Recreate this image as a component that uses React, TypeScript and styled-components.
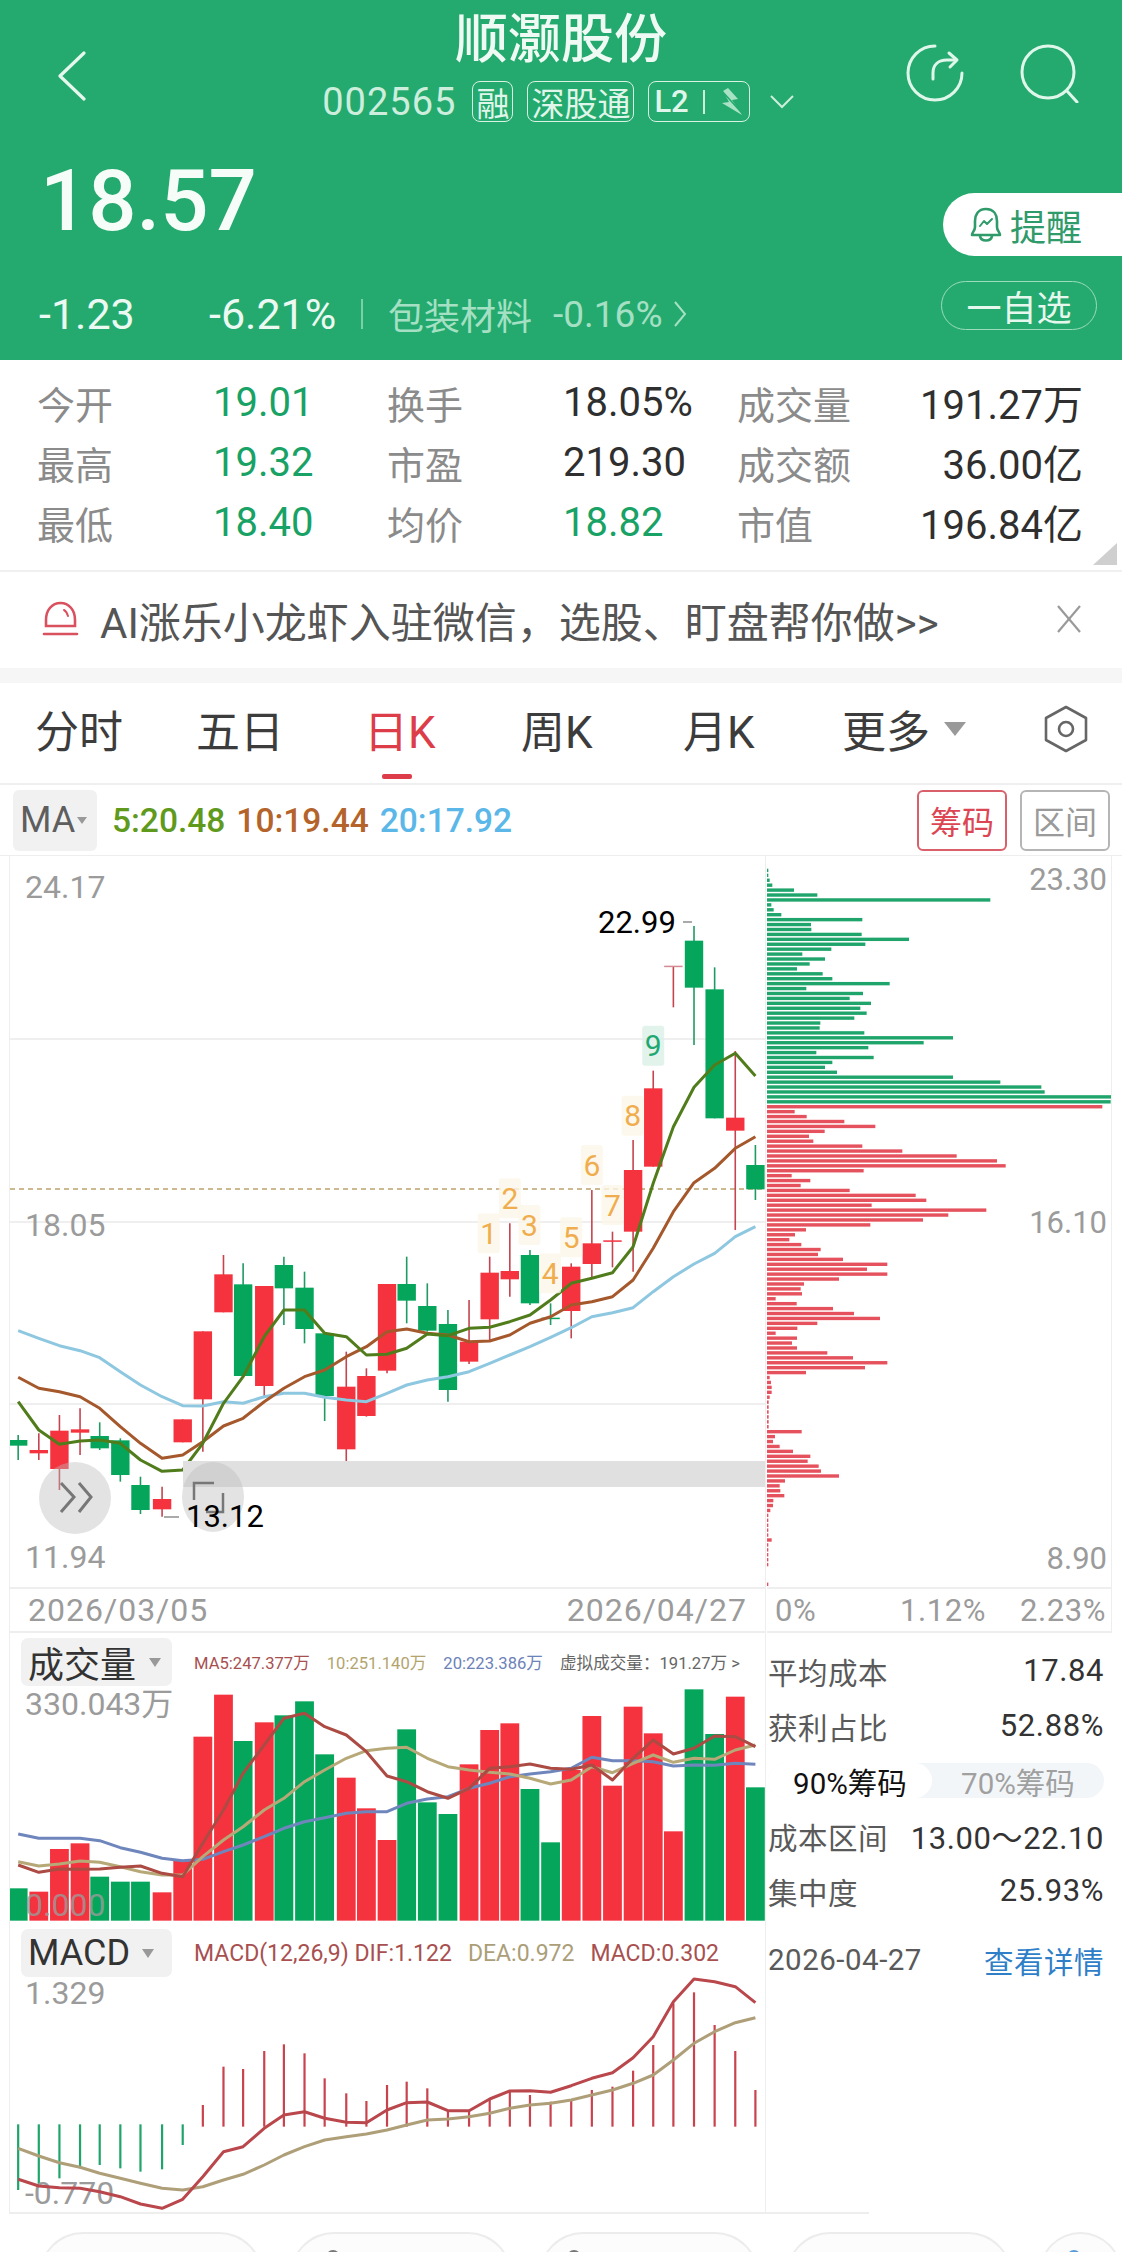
import React from "react";
import styled, { createGlobalStyle } from "styled-components";

const GlobalStyle = createGlobalStyle`
  html, body { margin: 0; padding: 0; background: #fff; }
  * { box-sizing: border-box; }
  body { font-family: Roboto, "Noto Sans CJK SC", sans-serif; }
`;

const FONT = `Roboto, "Noto Sans CJK SC", sans-serif`;
const GREEN = "#05a65c";
const RED = "#f5333f";

/* ---------- chart data, in page coordinates after the helpers below ---------- */
const ZX = [37, 79, 121, 163, 203, 245, 286, 330, 372, 413, 455, 495, 538, 578, 620, 661, 705, 746, 788, 828, 870, 912, 955, 997, 1038, 1079, 1121, 1163, 1205, 1247, 1289, 1330, 1371, 1413, 1455, 1497, 1538];
const cx = (i: number) => ZX[i] / 2.036;
const my = (v: number) => 1260 + v / 3;
const vy = (v: number) => 1630 + v / 3;
const dy = (v: number) => 1920 + v / 3;

type Candle = [string, number, number, number, number];
const CANDLES: Candle[] = [
  ["g", 525, 540, 557, 600], ["r", 520, 570, 580, 600], ["r", 465, 512, 627, 690], ["r", 445, 508, 518, 585],
  ["g", 487, 528, 565, 570], ["g", 535, 541, 645, 665], ["g", 650, 675, 750, 762], ["r", 680, 717, 748, 770],
  ["r", 478, 478, 547, 547], ["r", 214, 214, 418, 575], ["r", -15, 43, 157, 157], ["g", 10, 73, 348, 350],
  ["r", 78, 78, 378, 410], ["g", -10, 15, 85, 195], ["g", 35, 83, 207, 250], ["g", 220, 220, 408, 483],
  ["r", 275, 380, 568, 603], ["r", 325, 348, 468, 470], ["r", 72, 72, 332, 340], ["g", -10, 72, 122, 190],
  ["g", 70, 138, 212, 215], ["g", 150, 192, 390, 425], ["r", 120, 245, 305, 312], ["r", -10, 38, 178, 240],
  ["r", -110, 33, 58, 110], ["g", -30, -15, 130, 135], ["g", 130, 173, 176, 195], ["r", 10, 20, 153, 235],
  ["r", -210, -50, 12, 55], ["r", -85, -59, -56, 22], ["r", -360, -270, -85, 35], ["r", -568, -515, -280, -280],
  ["r", -882, -883, -880, -758], ["g", -1002, -958, -817, -645], ["g", -878, -812, -425, -425], ["r", -627, -427, -388, -90],
  ["g", -345, -285, -212, -180],
];
const MA5 = [425, 510, 553, 543, 540, 550, 600, 634, 630, 550, 430, 350, 230, 150, 150, 220, 230, 285, 283, 265, 222, 227, 205, 202, 185, 165, 120, 70, 55, 38, -40, -230, -400, -518, -585, -620, -552];
const MA10 = [352, 385, 395, 410, 445, 500, 550, 595, 585, 545, 498, 475, 425, 385, 350, 330, 290, 260, 215, 207, 220, 225, 245, 243, 225, 190, 170, 135, 125, 110, 60, -35, -145, -232, -275, -335, -370];
const MA20 = [212, 235, 257, 272, 293, 335, 375, 410, 437, 438, 425, 430, 410, 400, 400, 412, 420, 425, 400, 375, 360, 350, 335, 310, 285, 260, 232, 203, 170, 158, 143, 95, 50, 12, -20, -70, -100];

const VOL: [string, number][] = [
  ["g", 775], ["r", 785], ["r", 657], ["r", 640], ["g", 740], ["g", 755], ["g", 755], ["r", 787], ["r", 690], ["r", 320], ["r", 194], ["g", 333], ["r", 277],
  ["g", 256], ["g", 214], ["g", 373], ["r", 443], ["r", 535], ["r", 630], ["g", 298], ["g", 517], ["g", 552], ["r", 403], ["r", 300], ["r", 280], ["g", 477],
  ["g", 637], ["r", 420], ["r", 258], ["r", 467], ["r", 230], ["r", 310], ["r", 604], ["g", 178], ["g", 312], ["r", 200], ["g", 472],
];
const VMA5 = [705, 727, 717, 718, 717, 712, 708, 730, 740, 640, 540, 430, 345, 265, 250, 290, 315, 365, 438, 455, 485, 505, 475, 415, 410, 402, 415, 418, 405, 450, 385, 330, 372, 355, 318, 320, 350];
const VMA10 = [695, 708, 702, 693, 697, 710, 725, 735, 735, 680, 630, 590, 540, 505, 455, 420, 385, 362, 355, 352, 385, 410, 420, 427, 432, 445, 462, 450, 410, 428, 400, 375, 397, 385, 388, 360, 345];
const VMA20 = [612, 625, 625, 625, 632, 653, 667, 685, 692, 688, 665, 645, 620, 595, 575, 563, 550, 545, 545, 520, 507, 500, 475, 460, 440, 432, 425, 415, 382, 392, 392, 395, 408, 405, 406, 400, 403];

const MACD_TOPS = [810, 795, 775, 745, 735, 745, 755, 748, 675, 555, 440, 447, 393, 373, 400, 475, 520, 543, 495, 485, 505, 575, 573, 535, 510, 525, 545, 540, 510, 500, 452, 375, 250, 217, 315, 393, 510];
const DIF = [778, 798, 803, 805, 815, 830, 852, 865, 838, 770, 695, 680, 625, 585, 575, 595, 607, 608, 570, 548, 546, 572, 572, 537, 513, 512, 517, 497, 475, 458, 413, 350, 245, 177, 185, 200, 248];
const DEA = [685, 708, 728, 742, 760, 775, 790, 805, 810, 800, 780, 763, 735, 705, 680, 660, 650, 642, 630, 615, 600, 597, 590, 580, 565, 555, 550, 540, 525, 510, 490, 465, 420, 370, 335, 308, 293];

const CHIPS = [26, 26, 30, 38, 103, 173, 692, 35, 42, 65, 308, 154, 155, 306, 448, 317, 215, 128, 196, 150, 112, 189, 218, 390, 140, 310, 270, 334, 302, 321, 284, 182, 180, 314, 580, 492, 326, 170, 342, 218, 196, 232, 580, 722, 845, 855, 1055, 1053,
  1028, 105, 141, 254, 347, 195, 148, 161, 308, 428, 591, 712, 738, 312, 96, 152, 123, 270, 468, 500, 336, 680, 566, 490, 332, 139, 106, 89, 125, 183, 175, 250, 383, 322, 383, 238, 133, 123, 127, 48, 111, 220, 283, 361, 173, 113, 48, 112, 97, 112, 203, 280, 383, 316, 139, 30, 34, 36, 36, 30, 27, 27, 27, 27, 27, 27, 126, 46, 40, 60, 100, 152, 144, 177, 184, 238, 76, 60, 62, 74, 41, 40, 32, 26, 26, 26, 26, 26, 36, 26, 26, 26, 26, 26, 0, 0, 0, 26];
const GREEN_CHIPS = 48;

const T9: [string, number, number, boolean][] = [
  ["1", 995, -80, false], ["2", 1038, -185, false], ["3", 1078, -105, false], ["4", 1120, 40, false], ["5", 1163, -68, false],
  ["6", 1205, -285, false], ["7", 1247, -165, false], ["8", 1288, -433, false], ["9", 1330, -643, true],
];

const pts = (vals: number[], f: (v: number) => number) => vals.map((v, i) => `${cx(i).toFixed(1)},${f(v).toFixed(1)}`).join(" ");

/* ---------- layout ---------- */
const Page = styled.div`
  width: 1122px;
  height: 2252px;
  overflow: hidden;
  background: #fff;
  font-family: ${FONT};
`;

const Header = styled.header`
  height: 360px;
  background: #24aa6e;
  color: #f2fbf6;
`;

const Nav = styled.div`
  display: grid;
  grid-template-columns: 1fr auto 1fr;
  padding-top: 13px;
  height: 122px;
`;

const IconBack = styled.svg`
  margin: 38px 0 0 58px;
  width: 28px;
  height: 50px;
`;

const NavCenter = styled.div`
  display: flex;
  flex-direction: column;
  align-items: center;
`;

const Title = styled.h1`
  margin: 0 0 14px;
  height: 54px;
  line-height: 54px;
  font-size: 53px;
  font-weight: 500;
  color: #f0faf5;
  white-space: nowrap;
`;

const SubRow = styled.div`
  display: flex;
  align-items: center;
  gap: 14px;
  margin-left: -6px;
  height: 41px;
`;

const Code = styled.span`
  font-size: 38px;
  letter-spacing: 1px;
  color: #cdeedd;
  margin-right: 2px;
`;

const Tag = styled.span`
  display: inline-flex;
  align-items: center;
  justify-content: center;
  height: 41px;
  padding: 0 3px;
  border: 1.5px solid #d8f2e5;
  border-radius: 8px;
  font-size: 33px;
  color: #e0f6ea;
  white-space: nowrap;
`;

const LevelTag = styled(Tag)`
  gap: 14px;
  padding: 0 6px 0 5px;
  font-size: 31px;
  font-weight: 500;
`;

const Chevron = styled.svg`
  width: 24px;
  height: 14px;
  margin-left: 6px;
`;

const NavIcons = styled.div`
  display: flex;
  justify-content: flex-end;
  gap: 55px;
  margin: 30px 42px 0 0;
`;

const QuoteRow = styled.div`
  display: flex;
  justify-content: space-between;
`;

const QuoteLeft = styled.div`
  padding: 37px 0 0 39px;
`;

const Price = styled.div`
  height: 84px;
  line-height: 84px;
  font-size: 85px;
  font-weight: 500;
  margin-left: 1px;
  color: #f6fdf9;
`;

const ChangeRow = styled.div`
  display: flex;
  align-items: center;
  height: 40px;
  margin-top: 51px;
  white-space: nowrap;
`;

const Change = styled.span<{ $w: number }>`
  width: ${(p) => p.$w}px;
  font-size: 43px;
  color: #ecf9f2;
`;

const VBar = styled.i`
  display: block;
  width: 2px;
  height: 30px;
  margin: 0 25px 0 25px;
  background: #7cd0a8;
`;

const Sector = styled.span`
  font-size: 36px;
  color: #a5e0c4;
`;

const SectorPct = styled.span`
  font-size: 37px;
  color: #a5e0c4;
  margin-left: 21px;
`;

const Gt = styled.svg`
  width: 14px;
  height: 30px;
  margin-left: 11px;
`;

const QuoteRight = styled.div`
  display: flex;
  flex-direction: column;
  align-items: flex-end;
  padding-top: 71px;
`;

const RemindBtn = styled.div`
  display: flex;
  align-items: center;
  gap: 8px;
  width: 179px;
  height: 63px;
  padding-left: 27px;
  background: #fff;
  border-radius: 32px 0 0 32px;
  font-size: 36px;
  color: #2f9a6a;
`;

const WatchBtn = styled.div`
  display: flex;
  align-items: center;
  justify-content: center;
  width: 156px;
  height: 49px;
  margin: 25px 25px 0 0;
  border: 1.5px solid #9adcbd;
  border-radius: 25px;
  font-size: 35px;
  color: #e6f8ee;
`;

const Stats = styled.section`
  position: relative;
  display: grid;
  grid-template-columns: 176px 174px 176px 174px 100px 1fr;
  grid-auto-rows: 60px;
  height: 212px;
  padding: 12px 39px 0 37px;
  align-items: center;
  border-bottom: 2px solid #f0f0f0;
  font-size: 38px;
  white-space: nowrap;
`;

const StatLabel = styled.span`
  color: #8b8b8b;
`;

const StatValue = styled.span<{ $green?: boolean; $end?: boolean }>`
  font-size: 40px;
  color: ${(p) => (p.$green ? "#18a265" : "#2f2f2f")};
  text-align: ${(p) => (p.$end ? "right" : "left")};
`;

const Corner = styled.i`
  position: absolute;
  right: 5px;
  bottom: 5px;
  width: 24px;
  height: 22px;
  background: #cfcfcf;
  clip-path: polygon(100% 0, 100% 100%, 0 100%);
`;

const Banner = styled.section`
  display: flex;
  align-items: center;
  height: 96px;
  padding: 0 40px 2px 42px;
  font-size: 42px;
  color: #555;
`;

const BannerText = styled.span`
  flex: 1;
  margin-left: 21px;
  white-space: nowrap;
`;

const Gap = styled.div`
  height: 15px;
  background: #f6f6f6;
`;

const Tabs = styled.nav`
  display: grid;
  grid-template-columns: 161px 168px 157px 162px 159px 202px auto;
  align-items: center;
  height: 102px;
  padding: 0 0 8px 35px;
  border-bottom: 2px solid #efefef;
`;

const Tab = styled.span<{ $active?: boolean }>`
  position: relative;
  display: flex;
  align-items: center;
  font-size: 44px;
  color: ${(p) => (p.$active ? "#dd3d49" : "#3c3c3c")};
  white-space: nowrap;
  &::after {
    content: "";
    display: ${(p) => (p.$active ? "block" : "none")};
    position: absolute;
    left: 18px;
    top: 77px;
    width: 30px;
    height: 5px;
    border-radius: 2px;
    background: #dd3d49;
  }
`;

const Caret = styled.i<{ $w: number; $h: number; $c?: string; $ml?: number }>`
  display: inline-block;
  width: 0;
  height: 0;
  margin-left: ${(p) => p.$ml ?? 6}px;
  border-left: ${(p) => p.$w / 2}px solid transparent;
  border-right: ${(p) => p.$w / 2}px solid transparent;
  border-top: ${(p) => p.$h}px solid ${(p) => p.$c ?? "#9a9a9a"};
`;

const MaRow = styled.div`
  display: flex;
  align-items: center;
  height: 70px;
  padding: 4px 12px 4px 13px;
`;

const MaBtn = styled.div`
  display: flex;
  align-items: center;
  width: 84px;
  height: 61px;
  padding-left: 7px;
  background: #f1f1f1;
  border-radius: 6px;
  font-size: 36px;
  color: #5e5e5e;
`;

const MaValues = styled.div`
  display: flex;
  flex: 1;
  gap: 11px;
  margin-left: 15px;
`;

const MaValue = styled.span<{ $c: string }>`
  font-size: 33.5px;
  font-weight: 500;
  color: ${(p) => p.$c};
`;

const RangeBtn = styled.div<{ $c: string; $text: string }>`
  display: flex;
  align-items: center;
  justify-content: center;
  width: 90px;
  height: 61px;
  margin-right: 13px;
  border: 2px solid ${(p) => p.$c};
  border-radius: 6px;
  font-size: 32px;
  color: ${(p) => p.$text};
  &:last-child {
    margin-right: 0;
  }
`;

const Board = styled.div`
  display: grid;
  grid-template-columns: 757px 1fr;
  padding-left: 9px;
  border-top: 1px solid #eee;
`;

const LeftCol = styled.div`
  border-left: 1px solid #eee;
  border-right: 1px solid #eee;
`;

const RightCol = styled.div`
  padding-left: 1px;
`;

const Canvas = styled.svg`
  display: block;
`;

const DateRow = styled.div`
  display: flex;
  justify-content: space-between;
  align-items: center;
  height: 46px;
  padding: 0 18px;
  border-top: 2px solid #eee;
  border-bottom: 2px solid #eee;
  font-size: 32px;
  letter-spacing: 1px;
  color: #9b9b9b;
`;

const Panel = styled.div<{ $h: number }>`
  position: relative;
  height: ${(p) => p.$h}px;
`;

const PanelHead = styled.div`
  position: absolute;
  top: 5px;
  left: 11px;
  display: flex;
  align-items: center;
`;

const PanelBtn = styled.div`
  display: flex;
  align-items: center;
  width: 151px;
  height: 48px;
  padding-left: 7px;
  background: #f1f1f1;
  border-radius: 7px;
  font-size: 36px;
  color: #333;
`;

const Legend = styled.div<{ $size: number; $gap: number }>`
  display: flex;
  gap: ${(p) => p.$gap}px;
  margin: 0 0 0 22px;
  font-size: ${(p) => p.$size}px;
  white-space: nowrap;
`;

const LegendItem = styled.span<{ $c: string }>`
  color: ${(p) => p.$c};
`;

const ChipBox = styled.div`
  width: 345px;
  border-right: 1px solid #eee;
`;

const PctRow = styled.div`
  display: grid;
  grid-template-columns: 125px 120px 1fr;
  align-items: center;
  height: 46px;
  padding-left: 8px;
  border-top: 2px solid #eee;
  border-bottom: 2px solid #eee;
  font-size: 31px;
  letter-spacing: 0.6px;
  color: #9b9b9b;
`;

const Info = styled.div`
  display: flex;
  flex-direction: column;
  padding: 10px 18px 0 1px;
`;

const InfoRow = styled.div<{ $mt?: number }>`
  display: flex;
  justify-content: space-between;
  align-items: center;
  height: 55px;
  margin-top: ${(p) => p.$mt ?? 0}px;
  font-size: 29.5px;
  white-space: nowrap;
`;

const InfoLabel = styled.span`
  color: #5a5a5a;
  letter-spacing: 0.5px;
`;

const InfoValue = styled.span`
  color: #333;
  font-size: 31px;
  letter-spacing: 0.6px;
`;

const InfoLink = styled.span`
  color: #2f7ec8;
  letter-spacing: 0.5px;
`;

const ChipTabs = styled.div`
  display: flex;
  align-self: center;
  width: 100%;
  height: 35px;
  border-radius: 18px;
  background: #f3f6f9;
`;

const ChipTab = styled.div<{ $active?: boolean; $w: number }>`
  display: flex;
  align-items: center;
  justify-content: center;
  width: ${(p) => p.$w}px;
  border-radius: 18px;
  font-size: 29.5px;
  background: ${(p) => (p.$active ? "#fff" : "transparent")};
  color: ${(p) => (p.$active ? "#111" : "#a0a0a0")};
`;

const Rule = styled.div`
  margin-left: 9px;
  width: 860px;
  height: 2px;
  background: #eee;
`;

const Dock = styled.div`
  display: grid;
  grid-template-columns: 224px 222px 220px 226px 1fr;
  column-gap: 27px;
  margin-top: 18px;
  padding-left: 39px;
`;

const DockPill = styled.div`
  height: 60px;
  padding-top: 16px;
  border: 2px solid #ececec;
  border-bottom: 0;
  border-radius: 44px 44px 0 0;
  background: #fcfcfc;
`;

const DockDot = styled.i<{ $c: string; $ml: number }>`
  display: block;
  width: 14px;
  height: 14px;
  margin-left: ${(p) => p.$ml}px;
  border-radius: 50%;
  background: ${(p) => p.$c};
`;

/* ---------- svg text ---------- */
const AxisText = styled.text<{ $size?: number }>`
  font-family: ${FONT};
  font-size: ${(p) => p.$size ?? 32}px;
  fill: #9b9b9b;
  dominant-baseline: central;
`;

const PriceMark = styled.text`
  font-family: ${FONT};
  font-size: 31px;
  fill: #000;
  dominant-baseline: central;
`;

const T9Text = styled.text<{ $hit: boolean }>`
  font-family: ${FONT};
  font-size: 30px;
  fill: ${(p) => (p.$hit ? "#1fa772" : "#f0ad4e")};
  dominant-baseline: central;
  text-anchor: middle;
`;

const Line = ({ points, color, width = 3 }: { points: string; color: string; width?: number }) => (
  <polyline points={points} fill="none" stroke={color} strokeWidth={width} strokeLinejoin="round" />
);

/* ---------- charts ---------- */
const MainChart = () => (
  <Canvas width={755} height={731} viewBox="10 856 755 731">
    {[1038, 1221, 1403].map((y) => (
      <rect key={y} x={10} y={y} width={755} height={2} fill="#efefef" />
    ))}
    <line x1={10} x2={765} y1={1189} y2={1189} stroke="#cdb98f" strokeWidth={2} strokeDasharray="5 4" />
    <AxisText x={25} y={887}>24.17</AxisText>
    <AxisText x={25} y={1225}>18.05</AxisText>
    <AxisText x={25} y={1557}>11.94</AxisText>
    {CANDLES.map(([c, wt, bt, bb, wb], i) => {
      const fill = c === "g" ? GREEN : RED;
      const wick = c === "g" ? "#1f9a62" : "#c4444f";
      return (
        <g key={i}>
          <line x1={cx(i)} x2={cx(i)} y1={my(wt)} y2={my(wb)} stroke={wick} strokeWidth={1.6} />
          <rect x={cx(i) - 9.2} y={my(bt)} width={18.4} height={Math.max(my(bb) - my(bt), 1.5)} fill={i === 32 ? "#d58a92" : fill} />
        </g>
      );
    })}
    <Line points={pts(MA20, my)} color="#8ec7e0" />
    <Line points={pts(MA10, my)} color="#a5582b" />
    <Line points={pts(MA5, my)} color="#517c1c" />
    {T9.map(([n, zx, zy, hit]) => {
      const x = zx / 2.036;
      const y = my(zy);
      return (
        <g key={n}>
          <rect x={x - 11} y={y - 20} width={22} height={40} rx={3} fill={hit ? "#d9f0e6" : "#fdf6e9"} fillOpacity={0.8} />
          <T9Text x={x} y={y} $hit={hit}>{n}</T9Text>
        </g>
      );
    })}
    <PriceMark x={598} y={922}>22.99</PriceMark>
    <rect x={683} y={921} width={9} height={2} fill="#aaa" />
    <rect x={183} y={1461} width={582} height={26} fill="#e0e0e0" />
    <ellipse cx={75} cy={1498} rx={36} ry={36} fill="#bdbdbd" fillOpacity={0.42} />
    <ellipse cx={213} cy={1497} rx={31} ry={35} fill="#bdbdbd" fillOpacity={0.42} />
    <polyline points="61,1483 74,1497 61,1512" fill="none" stroke="#777" strokeWidth={3} />
    <polyline points="79,1483 91,1497 79,1512" fill="none" stroke="#777" strokeWidth={3} />
    <polyline points="194,1500 194,1483 214,1483" fill="none" stroke="#777" strokeWidth={2.5} />
    <polyline points="223,1493 223,1512 206,1512" fill="none" stroke="#777" strokeWidth={2.5} />
    <rect x={164} y={1516} width={15} height={2} fill="#aaa" />
    <PriceMark x={186} y={1516}>13.12</PriceMark>
  </Canvas>
);

const ChipChart = () => (
  <Canvas width={344} height={731} viewBox="767 856 344 731">
    {CHIPS.map((v, i) =>
      v === 0 ? null : (
        <rect
          key={i}
          x={767}
          y={850 + (40 + 9.65 * i) / 1.96 - 1.7}
          width={(v - 22) / 3}
          height={3.4}
          fill={i < GREEN_CHIPS ? "#1fa56b" : "#e5525d"}
        />
      )
    )}
    <AxisText x={1107} y={879} textAnchor="end" $size={31}>23.30</AxisText>
    <AxisText x={1107} y={1222} textAnchor="end" $size={31}>16.10</AxisText>
    <AxisText x={1107} y={1558} textAnchor="end" $size={31}>8.90</AxisText>
  </Canvas>
);

const VolumeChart = () => (
  <Canvas width={755} height={291} viewBox="10 1633 755 291">
    {VOL.map(([c, top], i) => (
      <rect key={i} x={cx(i) - 9.4} y={vy(top)} width={18.8} height={vy(872) - vy(top)} fill={c === "g" ? GREEN : RED} />
    ))}
    <Line points={pts(VMA20, vy)} color="#6f86bd" />
    <Line points={pts(VMA10, vy)} color="#b7a878" />
    <Line points={pts(VMA5, vy)} color="#ab4b43" />
    <AxisText x={25} y={1704}>330.043万</AxisText>
    <AxisText x={25} y={1905} fillOpacity={0.8}>0.000</AxisText>
  </Canvas>
);

const MacdChart = () => (
  <Canvas width={755} height={288} viewBox="10 1924 755 288">
    {MACD_TOPS.map((v, i) =>
      i < 9 ? (
        <rect key={i} x={cx(i) - 1.1} y={dy(613)} width={2.2} height={dy(v) - dy(613)} fill="#1fa56b" />
      ) : (
        <rect key={i} x={cx(i) - 1.1} y={dy(v)} width={2.2} height={dy(620) - dy(v)} fill="#c9434e" />
      )
    )}
    <AxisText x={25} y={1993}>1.329</AxisText>
    <AxisText x={25} y={2193}>-0.770</AxisText>
    <Line points={pts(DEA, dy)} color="#ae9f78" />
    <Line points={pts(DIF, dy)} color="#b9474c" />
  </Canvas>
);

const rows: [string, string, boolean, string, string, boolean, string, string][] = [
  ["今开", "19.01", true, "换手", "18.05%", false, "成交量", "191.27万"],
  ["最高", "19.32", true, "市盈", "219.30", false, "成交额", "36.00亿"],
  ["最低", "18.40", true, "均价", "18.82", true, "市值", "196.84亿"],
];

export default function App() {
  return (
    <Page>
      <GlobalStyle />
      <Header>
        <Nav>
          <IconBack viewBox="0 0 28 50">
            <polyline points="26,2 2,25 26,48" fill="none" stroke="#e6f7ee" strokeWidth={3.2} strokeLinecap="round" strokeLinejoin="round" />
          </IconBack>
          <NavCenter>
            <Title>顺灏股份</Title>
            <SubRow>
              <Code>002565</Code>
              <Tag>融</Tag>
              <Tag>深股通</Tag>
              <LevelTag>
                L2
                <svg width="2" height="24" viewBox="0 0 2 24">
                  <rect width="2" height="24" fill="#cdeedd" />
                </svg>
                <svg width="24" height="30" viewBox="0 0 24 30">
                  <path d="M9 1 L19 12 L13 13 L23 28 L3 16 L10 15 L4 4 Z" fill="#a9e3c6" />
                  <line x1="2" y1="3" x2="22" y2="25" stroke="#24aa6e" strokeWidth={1.6} />
                </svg>
              </LevelTag>
              <Chevron viewBox="0 0 24 14">
                <polyline points="1,1 12,12 23,1" fill="none" stroke="#cdeedd" strokeWidth={2} />
              </Chevron>
            </SubRow>
          </NavCenter>
          <NavIcons>
            <svg width="60" height="60" viewBox="0 0 60 60" fill="none" stroke="#dff6ea" strokeWidth={3} strokeLinecap="round" strokeLinejoin="round">
              <path d="M30 3 A27 27 0 1 0 57 30" />
              <path d="M28 36 V30 C28 22 33 17 42 17 H51" />
              <path d="M44 10 L52 17 L45 24" />
            </svg>
            <svg width="60" height="60" viewBox="0 0 60 60" fill="none" stroke="#dff6ea" strokeWidth={3} strokeLinecap="round">
              <circle cx="28" cy="29" r="26" />
              <line x1="47" y1="48" x2="57" y2="59" />
            </svg>
          </NavIcons>
        </Nav>
        <QuoteRow>
          <QuoteLeft>
            <Price>18.57</Price>
            <ChangeRow>
              <Change $w={170}>-1.23</Change>
              <Change $w={127}>-6.21%</Change>
              <VBar />
              <Sector>包装材料</Sector>
              <SectorPct>-0.16%</SectorPct>
              <Gt viewBox="0 0 14 30">
                <polyline points="2,3 12,15 2,27" fill="none" stroke="#a5e0c4" strokeWidth={2} />
              </Gt>
            </ChangeRow>
          </QuoteLeft>
          <QuoteRight>
            <RemindBtn>
              <svg width="32" height="36" viewBox="0 0 32 36" fill="none" stroke="#2f9a6a" strokeWidth={2.6} strokeLinejoin="round" strokeLinecap="round">
                <path d="M16 2 C8 2 5 8 5 14 V20 C5 24 2 25 2 28 H30 C30 25 27 24 27 20 V14 C27 8 24 2 16 2 Z" />
                <path d="M10 29 C11 35 21 35 22 29" />
                <path d="M10 19 L14 14 L17 17 L22 12" strokeWidth={2} />
              </svg>
              提醒
            </RemindBtn>
            <WatchBtn>一自选</WatchBtn>
          </QuoteRight>
        </QuoteRow>
      </Header>

      <Stats>
        {rows.map((r) => (
          <React.Fragment key={r[0]}>
            <StatLabel>{r[0]}</StatLabel>
            <StatValue $green={r[2]}>{r[1]}</StatValue>
            <StatLabel>{r[3]}</StatLabel>
            <StatValue $green={r[5]}>{r[4]}</StatValue>
            <StatLabel>{r[6]}</StatLabel>
            <StatValue $end>{r[7]}</StatValue>
          </React.Fragment>
        ))}
        <Corner />
      </Stats>

      <Banner>
        <svg width="37" height="36" viewBox="0 0 37 36" fill="none" stroke="#d9505f" strokeWidth={2.6} strokeLinecap="round">
          <path d="M4 25 V19 C4 9 10 2 18.5 2 C27 2 33 9 33 19 V25 Z" />
          <path d="M22 9 C24 10 25 12 26 15" strokeWidth={2} />
          <line x1="2" y1="33" x2="35" y2="33" />
        </svg>
        <BannerText>AI涨乐小龙虾入驻微信，选股、盯盘帮你做&gt;&gt;</BannerText>
        <svg width="26" height="28" viewBox="0 0 26 28" fill="none" stroke="#9a9a9a" strokeWidth={2.2}>
          <line x1="2" y1="1" x2="24" y2="27" />
          <line x1="24" y1="1" x2="2" y2="27" />
        </svg>
      </Banner>
      <Gap />

      <Tabs>
        <Tab>分时</Tab>
        <Tab>五日</Tab>
        <Tab $active>日K</Tab>
        <Tab>周K</Tab>
        <Tab>月K</Tab>
        <Tab>
          更多
          <Caret $w={22} $h={14} $c="#999" $ml={14} />
        </Tab>
        <svg width="44" height="48" viewBox="0 0 44 48" fill="none" stroke="#666" strokeWidth={2.6}>
          <path d="M22 2 L42 13 V35 L22 46 L2 35 V13 Z" strokeLinejoin="round" />
          <circle cx="22" cy="24" r="7" />
        </svg>
      </Tabs>

      <MaRow>
        <MaBtn>
          MA
          <Caret $w={10} $h={7} $c="#999" $ml={2} />
        </MaBtn>
        <MaValues>
          <MaValue $c="#5f9a1d">5:20.48</MaValue>
          <MaValue $c="#b4632a">10:19.44</MaValue>
          <MaValue $c="#5bb7e8">20:17.92</MaValue>
        </MaValues>
        <RangeBtn $c="#d9606b" $text="#dc4653">筹码</RangeBtn>
        <RangeBtn $c="#b5b5b5" $text="#9a9a9a">区间</RangeBtn>
      </MaRow>

      <Board>
        <LeftCol>
          <MainChart />
          <DateRow>
            <span>2026/03/05</span>
            <span>2026/04/27</span>
          </DateRow>
          <Panel $h={291}>
            <VolumeChart />
            <PanelHead>
              <PanelBtn>
                成交量
                <Caret $w={13} $h={9} $c="#999" $ml={13} />
              </PanelBtn>
              <Legend $size={16.6} $gap={17}>
                <LegendItem $c="#a85050">MA5:247.377万</LegendItem>
                <LegendItem $c="#b3a46e">10:251.140万</LegendItem>
                <LegendItem $c="#6d82b8">20:223.386万</LegendItem>
                <LegendItem $c="#666">虚拟成交量：191.27万 &gt;</LegendItem>
              </Legend>
            </PanelHead>
          </Panel>
          <Panel $h={288}>
            <MacdChart />
            <PanelHead>
              <PanelBtn>
                MACD
                <Caret $w={13} $h={9} $c="#999" $ml={12} />
              </PanelBtn>
              <Legend $size={23} $gap={16}>
                <LegendItem $c="#a85050">MACD(12,26,9) DIF:1.122</LegendItem>
                <LegendItem $c="#ab9e78">DEA:0.972</LegendItem>
                <LegendItem $c="#a85050">MACD:0.302</LegendItem>
              </Legend>
            </PanelHead>
          </Panel>
        </LeftCol>
        <RightCol>
          <ChipBox>
            <ChipChart />
            <PctRow>
              <span>0%</span>
              <span>1.12%</span>
              <span>2.23%</span>
            </PctRow>
          </ChipBox>
          <Info>
            <InfoRow>
              <InfoLabel>平均成本</InfoLabel>
              <InfoValue>17.84</InfoValue>
            </InfoRow>
            <InfoRow>
              <InfoLabel>获利占比</InfoLabel>
              <InfoValue>52.88%</InfoValue>
            </InfoRow>
            <InfoRow>
              <ChipTabs>
                <ChipTab $active $w={164}>90%筹码</ChipTab>
                <ChipTab $w={172}>70%筹码</ChipTab>
              </ChipTabs>
            </InfoRow>
            <InfoRow>
              <InfoLabel>成本区间</InfoLabel>
              <InfoValue>13.00～22.10</InfoValue>
            </InfoRow>
            <InfoRow>
              <InfoLabel>集中度</InfoLabel>
              <InfoValue>25.93%</InfoValue>
            </InfoRow>
            <InfoRow $mt={14}>
              <InfoLabel>2026-04-27</InfoLabel>
              <InfoLink>查看详情</InfoLink>
            </InfoRow>
          </Info>
        </RightCol>
      </Board>
      <Rule />
      <Dock>
        <DockPill />
        <DockPill><DockDot $c="#777" $ml={34} /></DockPill>
        <DockPill><DockDot $c="#777" $ml={26} /></DockPill>
        <DockPill />
        <DockPill><DockDot $c="#5b9bd8" $ml={26} /></DockPill>
      </Dock>
    </Page>
  );
}
